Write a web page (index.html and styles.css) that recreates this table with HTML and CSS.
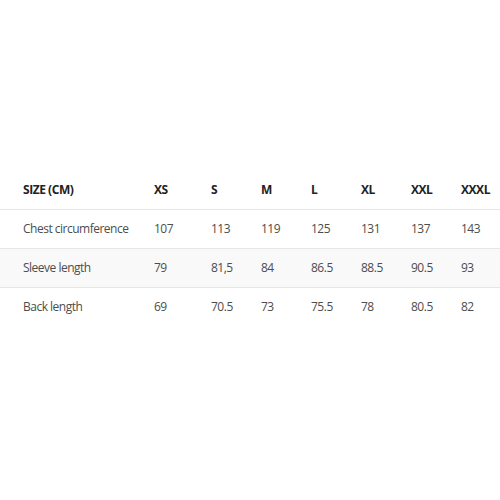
FILE: index.html
```html
<!DOCTYPE html>
<html>
<head>
<meta charset="utf-8">
<link rel="stylesheet" href="styles.css">
</head>
<body>
<table class="size-table">
  <colgroup>
    <col class="c-label"><col class="c-xs"><col class="c-s"><col class="c-n"><col class="c-n"><col class="c-n"><col class="c-n"><col class="c-last">
  </colgroup>
  <thead>
    <tr><th>SIZE (CM)</th><th>XS</th><th>S</th><th>M</th><th>L</th><th>XL</th><th>XXL</th><th>XXXL</th></tr>
  </thead>
  <tbody>
    <tr><td>Chest circumference</td><td>107</td><td>113</td><td>119</td><td>125</td><td>131</td><td>137</td><td>143</td></tr>
    <tr class="alt"><td>Sleeve length</td><td>79</td><td>81,5</td><td>84</td><td>86.5</td><td>88.5</td><td>90.5</td><td>93</td></tr>
    <tr class="last"><td>Back length</td><td>69</td><td>70.5</td><td>73</td><td>75.5</td><td>78</td><td>80.5</td><td>82</td></tr>
  </tbody>
</table>
</body>
</html>
```

FILE: styles.css
```css
html, body {
  margin: 0;
  padding: 0;
  background: #ffffff;
}
body {
  padding-top: 170px;
  font-family: "Open Sans", "Liberation Sans", sans-serif;
}
.size-table {
  width: 500px;
  border-collapse: collapse;
  table-layout: fixed;
  font-size: 12px;
  letter-spacing: -0.5px;
}
.c-label { width: 154px; }
.c-xs { width: 57px; }
.c-s { width: 50px; }
.c-n { width: 50px; }
.c-last { width: 39px; }
.size-table th,
.size-table td {
  height: 39px;
  padding: 0;
  text-align: left;
  vertical-align: middle;
  box-sizing: border-box;
}
.size-table th:first-child,
.size-table td:first-child {
  padding-left: 23px;
}
.size-table th {
  font-weight: 700;
  color: #222222;
  letter-spacing: -0.45px;
  border-bottom: 1px solid #e6e6e6;
}
.size-table td {
  color: #4d4d4d;
  border-bottom: 1px solid #e6e6e6;
}
.size-table tr.alt td {
  background: #f9f9f9;
}
.size-table tr.last td {
  border-bottom: none;
}
```
